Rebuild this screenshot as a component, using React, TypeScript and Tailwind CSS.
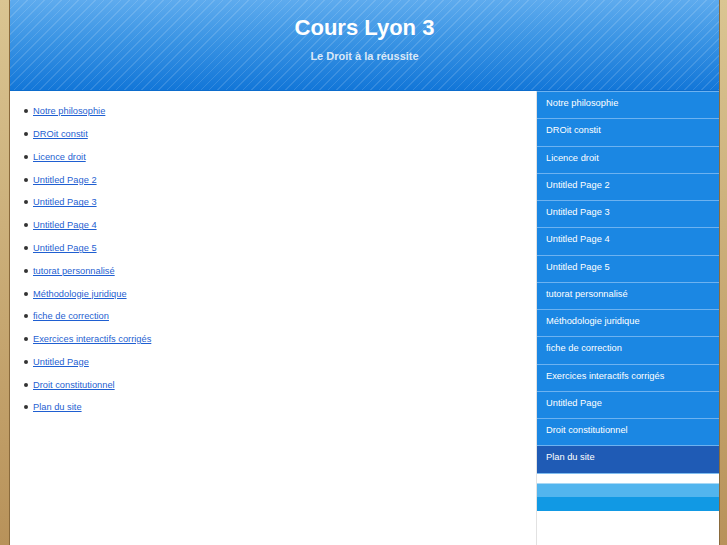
import React from "react";

const items = [
  "Notre philosophie",
  "DROit constit",
  "Licence droit",
  "Untitled Page 2",
  "Untitled Page 3",
  "Untitled Page 4",
  "Untitled Page 5",
  "tutorat personnalisé",
  "Méthodologie juridique",
  "fiche de correction",
  "Exercices interactifs corrigés",
  "Untitled Page",
  "Droit constitutionnel",
  "Plan du site",
];

export default function App() {
  return (
    <div className="w-[727px] h-[545px] overflow-hidden bg-[linear-gradient(to_bottom,#dac592,#b8925a)] font-['Liberation_Sans',Arial,sans-serif] flex">
      <div className="ml-[9px] w-[711px] h-full flex flex-col bg-white border-x border-[#8a6a3c]">
        <header className="h-[91px] shrink-0 flex flex-col items-center border-b border-[#0c6ccc] bg-[repeating-linear-gradient(135deg,rgba(255,255,255,0.13)_0px,rgba(255,255,255,0.13)_1px,transparent_1px,transparent_6px),linear-gradient(to_bottom,#5eabee,#3a94e4_45%,#1276d8)]">
          <h1 className="mt-[14px] text-[22px] leading-[28px] font-bold text-white">Cours Lyon 3</h1>
          <p className="mt-[7px] text-[11px] leading-[14px] font-bold text-[#dbe8f7]">Le Droit à la réussite</p>
        </header>
        <div className="flex flex-1">
          <ul className="flex-1 pt-[10px] pl-[14px]">
            {items.map((t) => (
              <li key={t} className="flex items-center h-[22.77px] text-[9.3px]">
                <span className="w-[4px] h-[4px] rounded-full bg-[#333] mr-[5px] mb-[2px]" />
                <a href="#" className="text-[#1f5fd1] underline">{t}</a>
              </li>
            ))}
          </ul>
          <aside className="w-[183px] border-l border-[#e2e2e2] flex flex-col">
            {items.map((t, i) => (
              <div
                key={t}
                className={
                  "h-[27.25px] flex items-center pl-[9px] pb-[2px] text-[9.3px] text-white border-t border-[#6db2f0] " +
                  (i === items.length - 1 ? "bg-[#1f5bb5]" : "bg-[#1b87e3]")
                }
              >
                {t}
              </div>
            ))}
            <div className="h-[10px] border-t border-[#7fbdf0] bg-white" />
            <div className="h-[14px] border-t border-[#a8d8f5] bg-[#52b5ee]" />
            <div className="h-[14px] bg-[#1199e4]" />
          </aside>
        </div>
      </div>
    </div>
  );
}
